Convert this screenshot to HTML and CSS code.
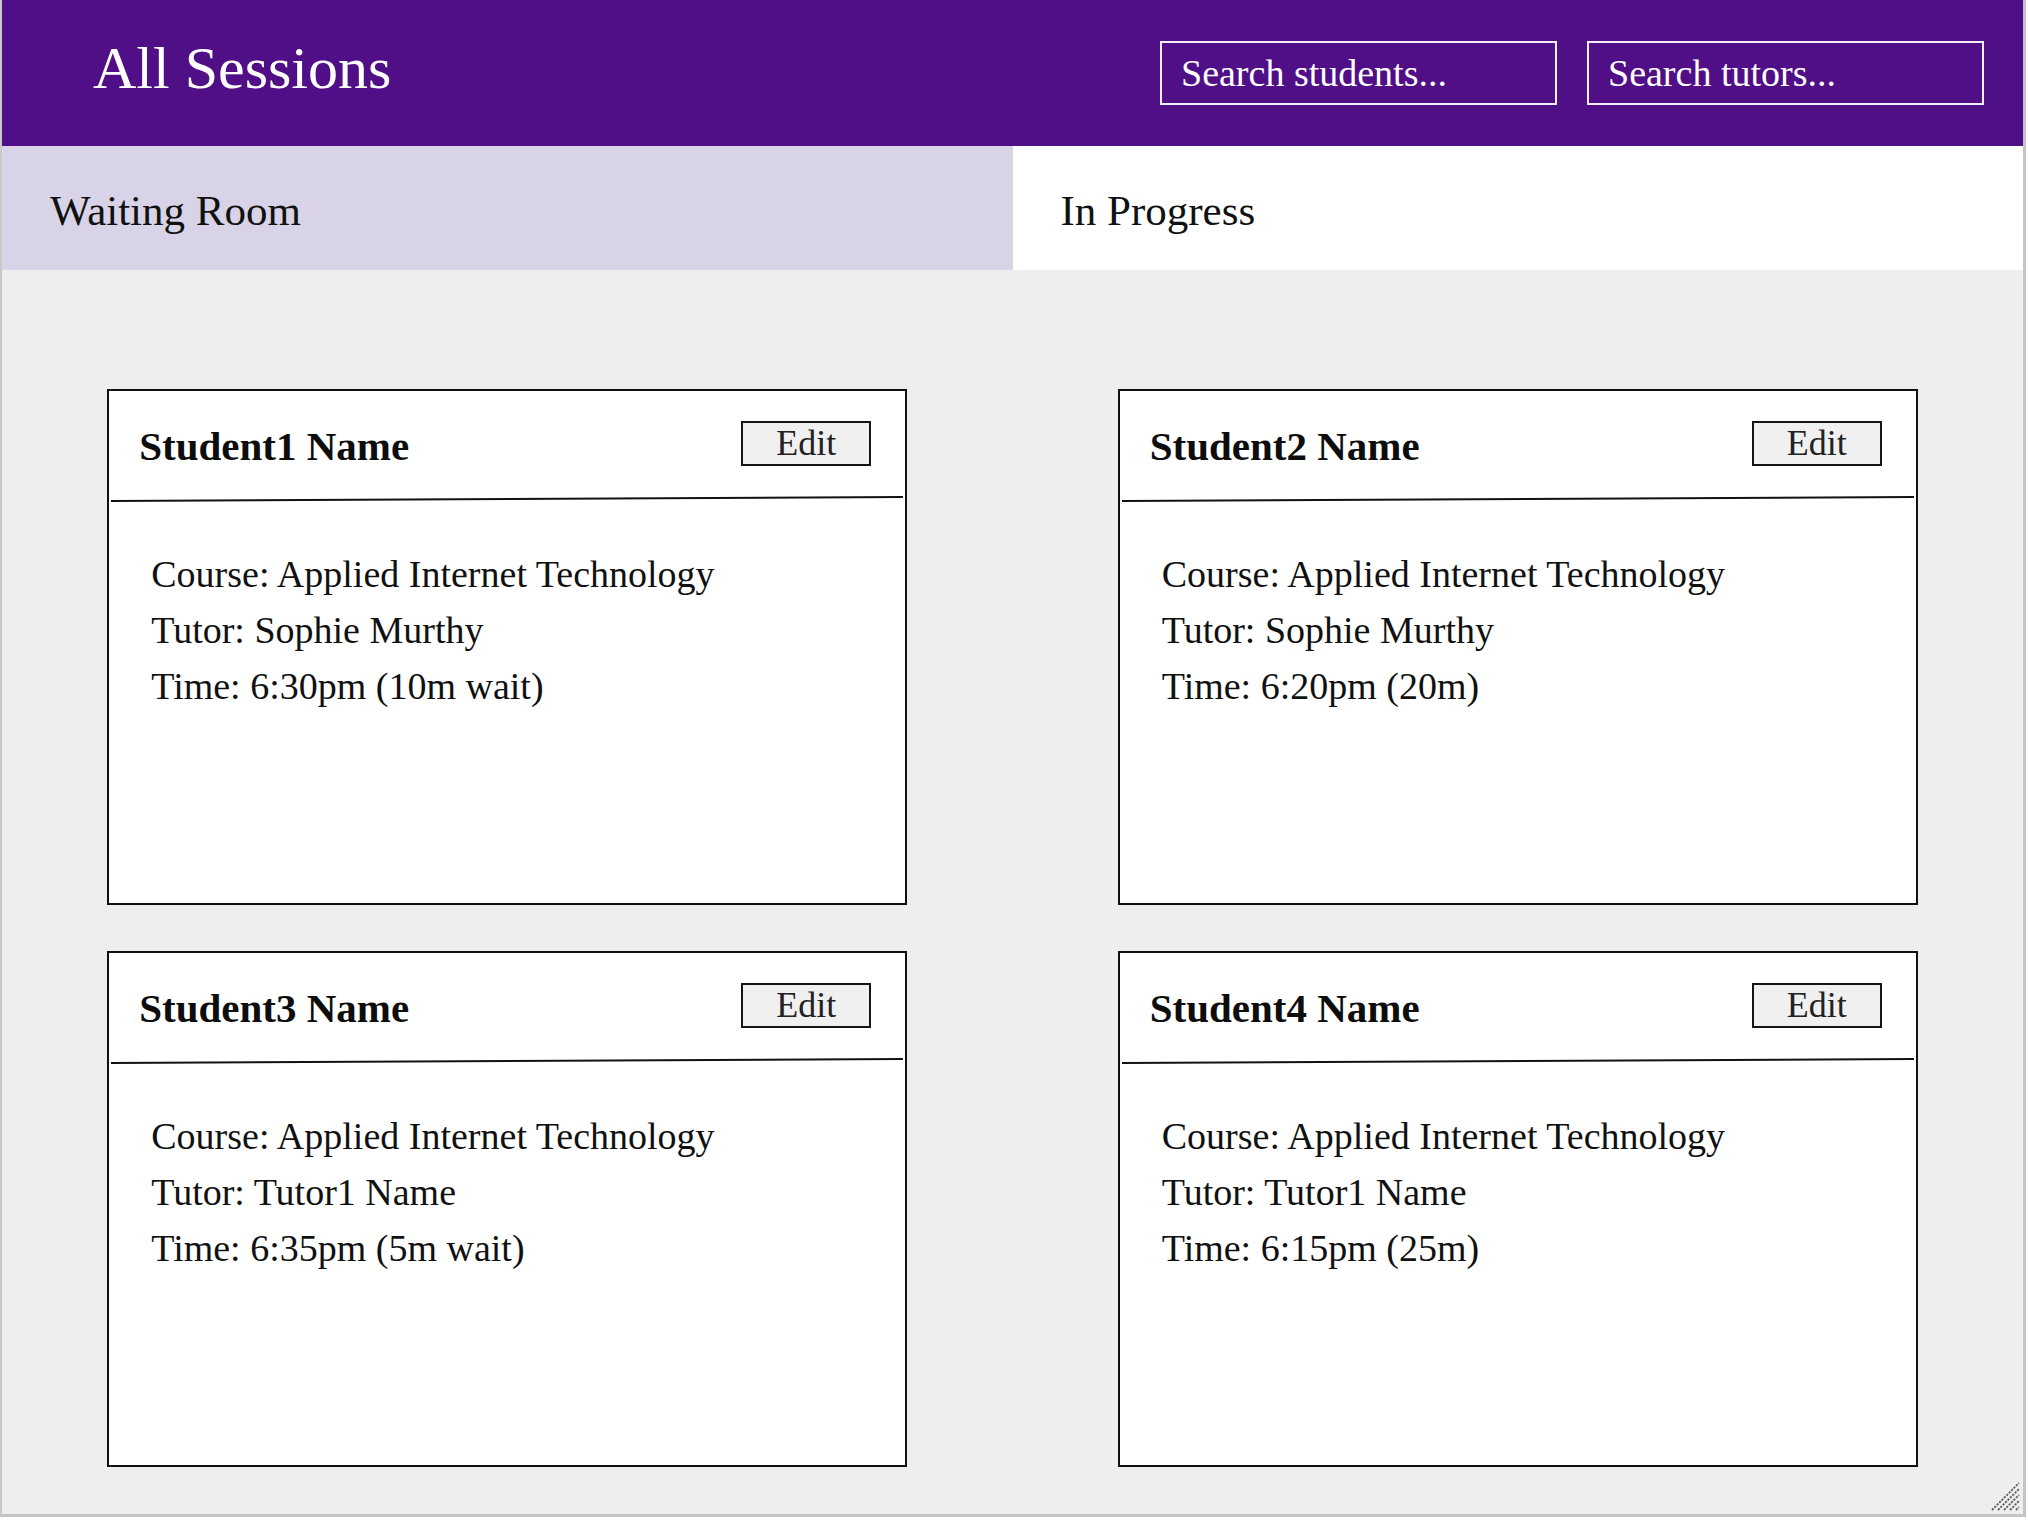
FILE: index.html
```html
<!DOCTYPE html>
<html lang="en">
<head>
<meta charset="utf-8">
<title>All Sessions</title>
<link rel="stylesheet" href="styles.css">
</head>
<body>
<div class="frame">
  <header class="topbar">
    <h1 class="title">All Sessions</h1>
    <div class="searches">
      <input class="search" type="text" placeholder="Search students...">
      <input class="search" type="text" placeholder="Search tutors...">
    </div>
  </header>
  <nav class="tabs">
    <div class="tab active">Waiting Room</div>
    <div class="tab">In Progress</div>
  </nav>
  <main class="board">
    <section class="card">
      <div class="card-head">
        <h2 class="card-name">Student1 Name</h2>
        <button class="edit" type="button">Edit</button>
      </div>
      <div class="rule"></div>
      <div class="card-body">
        <p>Course: Applied Internet Technology</p>
        <p>Tutor: Sophie Murthy</p>
        <p>Time: 6:30pm (10m wait)</p>
      </div>
    </section>
    <section class="card">
      <div class="card-head">
        <h2 class="card-name">Student2 Name</h2>
        <button class="edit" type="button">Edit</button>
      </div>
      <div class="rule"></div>
      <div class="card-body">
        <p>Course: Applied Internet Technology</p>
        <p>Tutor: Sophie Murthy</p>
        <p>Time: 6:20pm (20m)</p>
      </div>
    </section>
    <section class="card">
      <div class="card-head">
        <h2 class="card-name">Student3 Name</h2>
        <button class="edit" type="button">Edit</button>
      </div>
      <div class="rule"></div>
      <div class="card-body">
        <p>Course: Applied Internet Technology</p>
        <p>Tutor: Tutor1 Name</p>
        <p>Time: 6:35pm (5m wait)</p>
      </div>
    </section>
    <section class="card">
      <div class="card-head">
        <h2 class="card-name">Student4 Name</h2>
        <button class="edit" type="button">Edit</button>
      </div>
      <div class="rule"></div>
      <div class="card-body">
        <p>Course: Applied Internet Technology</p>
        <p>Tutor: Tutor1 Name</p>
        <p>Time: 6:15pm (25m)</p>
      </div>
    </section>
  </main>
  <svg class="grip" width="30" height="30" viewBox="0 0 30 30" aria-hidden="true">
    <g stroke="#5e5e5e" stroke-width="1.8" stroke-dasharray="2.2 1.2">
      <line x1="2" y1="29" x2="29" y2="2"/>
      <line x1="8" y1="29" x2="29" y2="8"/>
      <line x1="14" y1="29" x2="29" y2="14"/>
      <line x1="20" y1="29" x2="29" y2="20"/>
      <line x1="26" y1="29" x2="29" y2="26"/>
    </g>
  </svg>
</div>
</body>
</html>
```

FILE: styles.css
```css
* {
  box-sizing: border-box;
}

html, body {
  margin: 0;
  padding: 0;
  background: #ffffff;
}

body {
  font-family: "Liberation Serif", "Times New Roman", serif;
  color: #111111;
}

.frame {
  position: relative;
  width: 2026px;
  height: 1517px;
  border-left: 2px solid #c9c9c9;
  border-right: 3px solid #c4c4c4;
  border-bottom: 3px solid #c4c4c4;
  background: #eeeeee;
  display: flex;
  flex-direction: column;
  overflow: hidden;
}

.topbar {
  height: 146px;
  flex: none;
  background: #500e87;
  display: flex;
  align-items: center;
  justify-content: space-between;
  padding: 0 39px 0 91px;
}

.title {
  margin: 0 0 10px 0;
  font-size: 60px;
  font-weight: normal;
  color: #ffffff;
  line-height: normal;
}

.searches {
  display: flex;
  gap: 30px;
}

.search {
  width: 397px;
  height: 64px;
  border: 2px solid #f3eff8;
  background: transparent;
  color: #ffffff;
  font-family: "Liberation Serif", "Times New Roman", serif;
  font-size: 38px;
  padding: 0 0 0 19px;
  outline: none;
  border-radius: 0;
}

.search::placeholder {
  color: #ffffff;
  opacity: 1;
}

.tabs {
  display: flex;
  height: 124px;
  flex: none;
}

.tab {
  flex: 1;
  display: flex;
  align-items: center;
  padding: 4px 0 0 48px;
  font-size: 43px;
  background: #ffffff;
  color: #111111;
}

.tab.active {
  background: #d8d3e7;
}

.board {
  flex: 1;
  display: grid;
  grid-template-columns: 1fr 1fr;
  grid-auto-rows: 516px;
  row-gap: 46px;
  justify-items: center;
  align-content: start;
  padding-top: 119px;
}

.card {
  width: 800px;
  height: 516px;
  border: 2px solid #111111;
  background: #ffffff;
}

.card-head {
  display: flex;
  align-items: flex-start;
  justify-content: space-between;
  padding: 30px 34px 32px 30px;
}

.card-name {
  margin: 6px 0 0 0;
  font-size: 41px;
  font-weight: bold;
  line-height: 39px;
  color: #0d0d0d;
}

.edit {
  width: 130px;
  height: 45px;
  border: 2px solid #151515;
  background: #f0f0f0;
  font-family: "Liberation Serif", "Times New Roman", serif;
  font-size: 36px;
  line-height: 41px;
  padding: 0;
  color: #222222;
  border-radius: 0;
}

.rule {
  height: 2px;
  margin: 0 2px;
  background: #111111;
  transform: rotate(-0.29deg);
}

.card-body {
  padding: 46px 0 0 42px;
}

.card-body p {
  margin: 0;
  font-size: 38px;
  line-height: 56px;
  color: #111111;
}

.grip {
  position: absolute;
  right: 3px;
  bottom: 3px;
}
```
